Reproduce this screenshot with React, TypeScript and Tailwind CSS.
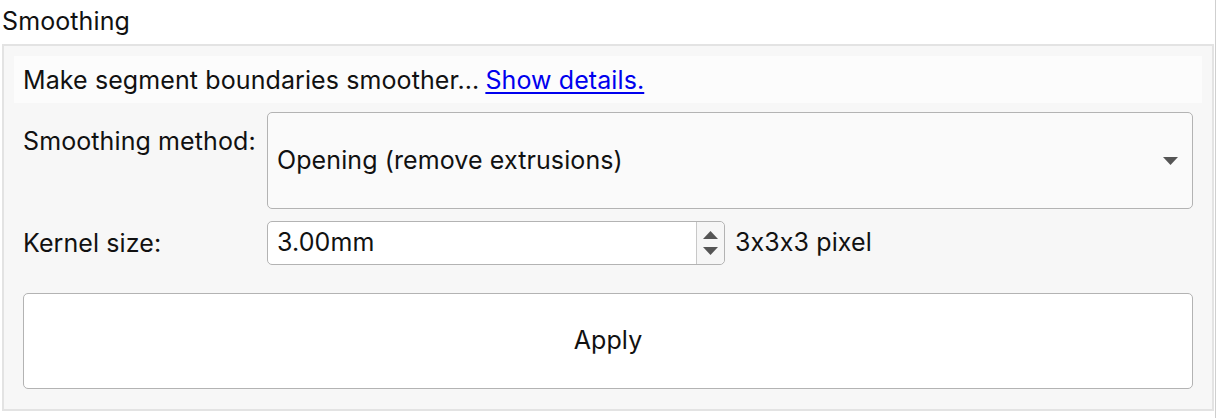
export default function App() {
  return (
    <div className="w-[1218px] h-[418px] bg-white text-[#111] font-['Inter',sans-serif] text-[25px] tracking-[0.1px] [font-feature-settings:'calt'_0]">
      <div className="w-[1216px] h-[418px] border-r border-[#cfcfcf]">
        <div className="h-[44px] pt-[6px] pl-[2px] leading-[30px]">Smoothing</div>
        <div className="ml-[2px] w-[1212px] border-2 border-[#e3e3e3] bg-[#f7f7f7] flex flex-col">
          <div className="mx-[10px] mt-[10px] h-[47px] bg-[#fcfcfc] pl-[9px] flex items-center leading-[30px]">
            <span>Make segment boundaries smoother...</span>
            <a href="#" className="ml-[6px] text-[#0000ee] underline underline-offset-[3px]">
              Show details.
            </a>
          </div>

          <div className="px-[19px] pb-[20px] flex flex-col">
            <div className="mt-[9px] flex">
              <div className="w-[244px] pt-[14px] leading-[30px]">Smoothing method:</div>
              <div className="flex-1 h-[97px] rounded-[5px] border border-[#b3b3b3] bg-[#fafafa] flex items-center pl-[9px] pr-[14px]">
                <span className="flex-1">Opening (remove extrusions)</span>
                <svg width="15" height="8" viewBox="0 0 15 8">
                  <path d="M0 0 H15 L7.5 8 Z" fill="#555" />
                </svg>
              </div>
            </div>

            <div className="mt-[12px] flex items-center">
              <div className="w-[244px] leading-[30px]">Kernel size:</div>
              <div className="w-[458px] h-[44px] rounded-[5px] border border-[#b3b3b3] bg-white flex">
                <div className="flex-1 pl-[9px] flex items-center">3.00mm</div>
                <div className="w-[28px] border-l border-[#c8c8c8] bg-[#f6f6f6] rounded-r-[5px] flex flex-col items-center justify-center gap-[8px]">
                  <svg width="15" height="8" viewBox="0 0 15 8">
                    <path d="M0 8 H15 L7.5 0 Z" fill="#555" />
                  </svg>
                  <svg width="15" height="8" viewBox="0 0 15 8">
                    <path d="M0 0 H15 L7.5 8 Z" fill="#555" />
                  </svg>
                </div>
              </div>
              <span className="ml-[10px]">3x3x3 pixel</span>
            </div>

            <button className="mt-[28px] h-[96px] rounded-[5px] border border-[#b3b3b3] bg-white flex items-center justify-center">
              Apply
            </button>
          </div>
        </div>
      </div>
    </div>
  );
}
